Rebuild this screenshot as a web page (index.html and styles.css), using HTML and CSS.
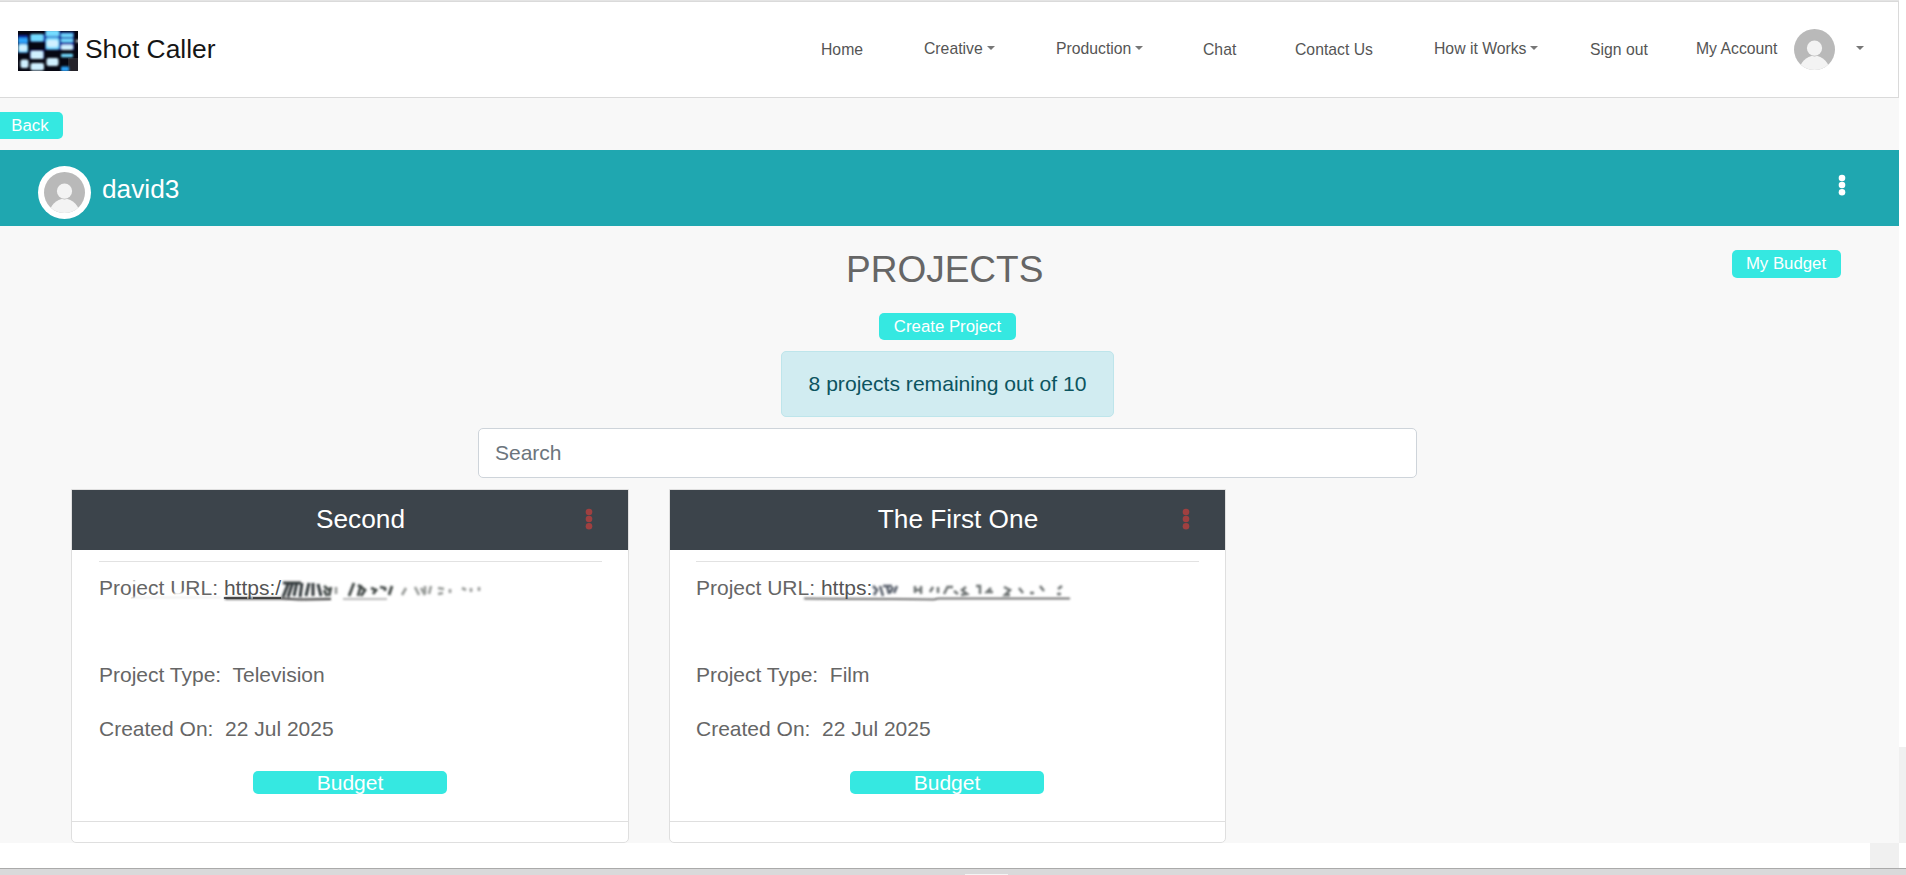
FILE: index.html
```
<!DOCTYPE html>
<html lang="en">
<head>
<meta charset="utf-8">
<title>Shot Caller</title>
<link rel="stylesheet" href="styles.css">
</head>
<body>
<svg class="defs" width="0" height="0">
  <symbol id="avatar" viewBox="0 0 42 42">
    <clipPath id="round"><circle cx="21" cy="21" r="21"/></clipPath>
    <g clip-path="url(#round)"><rect width="42" height="42" fill="#b9b9b9"/>
    <ellipse cx="21" cy="44" rx="15.5" ry="16.5" fill="#f3f3f3"/>
    <circle cx="21" cy="19.5" r="8.7" fill="#b9b9b9"/>
    <circle cx="21" cy="19.5" r="7.8" fill="#f3f3f3"/></g>
  </symbol>
  <symbol id="dots" viewBox="0 0 8 22">
    <circle cx="4" cy="4" r="3.3"/><circle cx="4" cy="11" r="3.3"/><circle cx="4" cy="18.2" r="3.3"/>
  </symbol>
</svg>
<div class="page">
  <header class="navbar">
    <a class="brand">
      <svg class="logo" viewBox="0 0 60 40">
        <defs><filter id="soft"><feGaussianBlur stdDeviation="1"/></filter></defs>
        <rect width="60" height="40" fill="#060712"/>
        <rect x="50" y="27" width="10" height="13" fill="#25232a"/>
        <g filter="url(#soft)">
          <g fill="#0a2aa0"><rect x="0" y="4" width="10" height="18"/><rect x="12" y="3" width="15" height="8"/><rect x="27" y="-1" width="15" height="20"/><rect x="42" y="1" width="14" height="18"/><rect x="12" y="19" width="14" height="9"/></g>
          <g fill="#2fa4fb"><rect x="0" y="7" width="10" height="5" rx="1"/><rect x="43" y="35.5" width="8" height="5" rx="1"/></g>
          <g fill="#74dcff"><rect x="12.5" y="3" width="13" height="7.5" rx="2"/><rect x="28" y="-1" width="13" height="6.5" rx="1"/><rect x="28" y="6.5" width="13" height="12" rx="2"/><rect x="43" y="2.5" width="12" height="3.5" rx="1"/><rect x="43" y="7.5" width="12" height="3.5" rx="1"/><rect x="43" y="22.8" width="12" height="3.4" rx="1"/><rect x="0" y="13" width="10" height="8.5" rx="2"/></g>
          <g fill="#d0f0ff"><rect x="1" y="14" width="8" height="6" rx="2"/><rect x="29" y="9" width="11" height="7" rx="2"/><rect x="43" y="13.5" width="12" height="5.5" rx="2"/><rect x="12.5" y="20" width="13" height="8" rx="2"/><rect x="2.5" y="28.5" width="8" height="8.5" rx="2"/><rect x="12.5" y="32" width="13.5" height="7.5" rx="2"/><rect x="28.5" y="27" width="12" height="8" rx="2"/></g>
          <circle cx="59.5" cy="10" r="1.6" fill="#ddd"/>
        </g>
      </svg>
      <span>Shot Caller</span>
    </a>
    <nav class="nav">
      <a class="home low">Home</a>
      <a class="creative caret">Creative</a>
      <a class="production caret">Production</a>
      <a class="chat low">Chat</a>
      <a class="contact low">Contact Us</a>
      <a class="how caret">How it Works</a>
      <a class="sign low">Sign out</a>
      <a class="account">My Account</a>
      <svg class="face"><use href="#avatar"/></svg>
      <a class="caret only"></a>
    </nav>
  </header>
  <div class="backrow"><button class="btn back">Back</button></div>
  <section class="userbar">
    <div class="ring"><svg class="ringface"><use href="#avatar"/></svg></div>
    <span class="username">david3</span>
    <svg class="dots"><use href="#dots"/></svg>
  </section>
  <main>
    <div class="heading">
      <h1>PROJECTS</h1>
      <button class="btn mybudget">My Budget</button>
    </div>
    <div class="center">
      <button class="btn create">Create Project</button>
      <div class="alert">8 projects remaining out of 10</div>
      <input class="search" placeholder="Search">
    </div>
    <div class="cards">
      <article class="card">
        <div class="cardhead"><h2>Second</h2><svg class="dots red"><use href="#dots"/></svg></div>
        <div class="cardbody">
          <p class="url">Project URL: <a>https:/</a><svg class="smudge" viewBox="0 0 230 24"><defs><filter id="smear" x="-40%" width="180%" y="-50%" height="200%"><feGaussianBlur stdDeviation="0.8"/></filter></defs>
            <g filter="url(#smear)" fill="none">
              <path d="M-151 20.5H-128M-107 16H-97" stroke="#fff" stroke-width="5"/>
              <path d="M-151 3H-144" stroke="#fff" stroke-width="3.5"/>
              <path d="M-148 18.5H-60" stroke="#e4e4e4" stroke-width="1"/>
              <path d="M-56 19.5H0L20 20.5L50 20" stroke="#333" stroke-width="1.8"/><path d="M62 20H106" stroke="#777"/>
              <path d="M2 18L8 3M7 18L12 3M13 17L16 3M19 18L21 4M25 17L28 4M32 17V4M37 5L40 17M2 4H20" stroke="#30383a" stroke-width="3"/>
              <path d="M43 11L46 17M50 8L48 17M43 7L49 12M68 17L73 4M77 17L80 6M77 6L84 11L80 17M90 9L95 11L92 15M99 8L104 9M111 7L108 16M104 8V12" stroke="#454c4a" stroke-width="2.8"/>
              <path d="M55 8V15M125 9L121 16M134 8L138 16M140 9L144 16M144 7V15M150 7L148 15M157 9L163 10M162 14L157 15M169 10V14M181 9L185 11M190 9V13M198 8V12" stroke="#989b99" stroke-width="2.6"/>
            </g></svg></p>
          <p class="type">Project Type:&nbsp; Television</p>
          <p class="date">Created On:&nbsp; 22 Jul 2025</p>
          <button class="btn budget">Budget</button>
        </div>
      </article>
      <article class="card">
        <div class="cardhead"><h2>The First One</h2><svg class="dots red"><use href="#dots"/></svg></div>
        <div class="cardbody">
          <p class="url">Project URL: <a class="plain">https:</a><svg class="smudge" viewBox="0 0 230 24">
            <g filter="url(#smear)" fill="none">
              <path d="M-68 19.5L-40 19.8L20 20L62 20.5L66 19.5H198" stroke="#444" stroke-width="1.6"/>
              <path d="M1 7L5 11L2 16M8 7L11 17M15 7L17 15M21 8L18 14M25 7L22 14M11 7H20" stroke="#59606c" stroke-width="2.6"/>
              <path d="M43 7V14M49 7V15M44 11H49M61 8L58 13M66 8V14M76 7L72 15M76 8H81M82 12L86 15M94 8L90 11L95 15L89 16M104 7H108V15M119 9L115 13H121M132 8L138 11L133 16H138M147 9L151 14M158 14H162M168 7L172 12M190 7L186 10M185 15L189 15" stroke="#6f7474" stroke-width="2.5"/>
            </g></svg></p>
          <p class="type">Project Type:&nbsp; Film</p>
          <p class="date">Created On:&nbsp; 22 Jul 2025</p>
          <button class="btn budget">Budget</button>
        </div>
      </article>
    </div>
  </main>
</div>
<div class="scrolltrack"></div>
<div class="corner"></div>
<footer class="taskbar"><span class="handle"></span></footer>
</body>
</html>
```

FILE: styles.css
```
* { box-sizing: border-box; }
html { font-size: 21px; }
body {
  margin: 0;
  height: 875px;
  overflow: hidden;
  display: grid;
  grid-template-columns: 1870px 29px 7px;
  grid-template-rows: 843px 25px 7px;
  background: #fff;
  color: #666;
  font-family: "Liberation Sans", Arial, sans-serif;
}
.defs { position: absolute; }
.page { grid-column: 1 / 3; grid-row: 1; background: #f8f8f8; overflow: hidden; border-top: 1px solid #e4e4e4; }
h1, h2, p { margin: 0; font-weight: 400; }
.navbar {
  height: 97px;
  background: #fff;
  border: 1px solid #dadada;
  border-left: 0;
  display: flex;
  align-items: center;
  padding-left: 18px;
}
.brand { display: flex; align-items: center; gap: 7px; width: 199px; color: #151515; font-size: 26.4px; line-height: 40px; white-space: nowrap; }
.brand span { padding-bottom: 2px; }
.logo { width: 60px; height: 40px; margin-top: 3px; }
.nav { display: flex; align-items: center; flex: 1; font-size: 15.75px; line-height: 24px; color: #555; white-space: nowrap; padding-bottom: 1px; }
.nav a { display: block; }
.low { padding-top: 1px; }
.home { margin-left: 604px; width: 103px; }
.creative { width: 132px; }
.production { width: 147px; }
.chat { width: 92px; }
.contact { width: 139px; }
.how { width: 156px; }
.sign { width: 106px; }
.account { width: 98px; }
.face { width: 41px; height: 41px; margin-top: 0; }
.caret::after {
  content: "";
  display: inline-block;
  margin-left: 4px;
  vertical-align: 4px;
  border-top: 4px solid #777;
  border-left: 4px solid transparent;
  border-right: 4px solid transparent;
}
.only { margin-left: 17px; }
.btn {
  display: block;
  padding: 0;
  border: 0;
  border-radius: 5px;
  background: #35e8e1;
  color: #fff;
  font: 16.8px/26px "Liberation Sans", Arial, sans-serif;
  text-align: center;
}
.backrow { height: 52px; padding-top: 14px; }
.back { width: 68px; height: 27px; margin-left: -5px; padding-left: 2px; }
.userbar { height: 76px; background: #1fa7b0; display: flex; align-items: flex-start; padding: 16px 53px 0 38px; }
.ring { width: 53px; height: 53px; border-radius: 50%; background: #fff; padding: 6px; }
.ringface { display: block; width: 41px; height: 41px; }
.username { flex: 1; margin-left: 11px; font-size: 26.25px; line-height: 46px; color: #fff; }
.dots { width: 8px; height: 22px; fill: #fff; margin-top: 8px; }
.heading { height: 87px; padding-top: 19px; display: flex; }
h1 { margin-left: 846px; width: 886px; font-size: 37px; line-height: 50px; }
.mybudget { width: 109px; height: 28px; margin-top: 5px; padding-right: 1px; }
.center { display: flex; flex-direction: column; align-items: center; width: 1895px; }
.create { width: 137px; height: 27px; }
.alert {
  width: 333px;
  height: 66px;
  margin-top: 11px;
  border: 1px solid #bee5eb;
  border-radius: 5px;
  background: #d1ecf1;
  color: #0c5460;
  font-size: 21.1px;
  line-height: 64px;
  text-align: center;
}
.search {
  width: 939px;
  height: 50px;
  margin-top: 11px;
  border: 1px solid #ced4da;
  border-radius: 5px;
  padding: 0 16px;
  font: 21px "Liberation Sans", Arial, sans-serif;
}
.search::placeholder { color: #6c757d; opacity: 1; }
.cards { display: flex; gap: 40px; padding: 11px 0 0 71px; }
.card { width: 558px; height: 354px; background: #fff; border: 1px solid #dfdfdf; border-radius: 0 0 5px 5px; overflow: hidden; }
.card + .card { width: 557px; }
.cardhead { height: 60px; background: #3c444b; color: #fff; display: flex; padding-left: 64px; }
.cardhead h2 { flex: 1; text-align: center; font-size: 26.25px; line-height: 58px; }
.cardhead .dots { margin: 18px 35px 0 0; }
.red { fill: #9f4040; }
.cardbody { height: 272px; padding: 11px 26px 0 27px; border-bottom: 1px solid #dfdfdf; font-size: 21px; line-height: 32px; }
.card + .card .cardbody { padding-left: 26px; }
.url { border-top: 1px solid #e2e2e2; height: 98px; padding-top: 10px; white-space: nowrap; }
.url a { color: #555; text-decoration: underline; }
.url .plain { text-decoration: none; }
.smudge { width: 230px; height: 24px; overflow: visible; vertical-align: -8px; }
.type { height: 54px; }
.budget { width: 194px; height: 23px; margin: 26px 0 0 154px; font-size: 21px; line-height: 23px; }
.scrolltrack { grid-column: 3; grid-row: 1; margin-top: 747px; background: #f0f0f0; }
.corner { grid-column: 2; grid-row: 2; background: #f0f0f0; }
.taskbar { grid-column: 1 / 4; grid-row: 3; border-top: 1px solid #aaa; background: #d9d9da; display: flex; align-items: flex-end; padding-left: 965px; }
.handle { width: 43px; height: 1px; background: #f4f4f4; }
```
